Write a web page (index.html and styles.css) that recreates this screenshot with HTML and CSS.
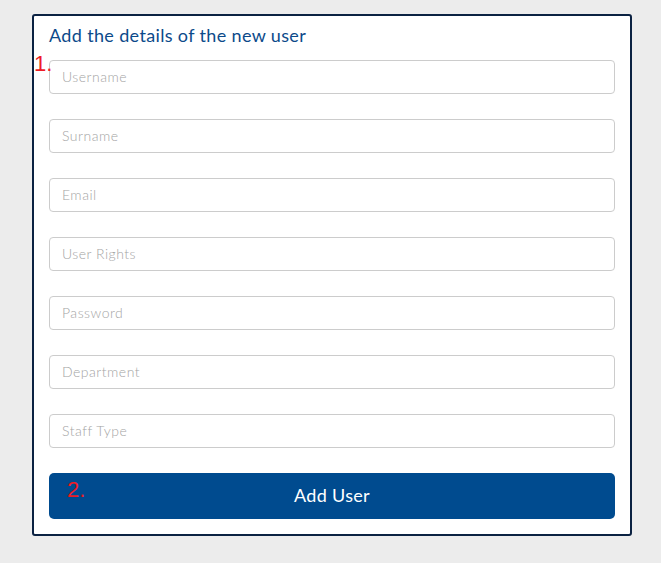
FILE: index.html
```html
<!DOCTYPE html>
<html lang="en">
<head>
<meta charset="utf-8">
<title>Add User</title>
<link rel="stylesheet" href="styles.css">
</head>
<body>
<div class="page">
  <div class="card">
    <span class="marker marker-1">1.</span>
    <h2 class="title">Add the details of the new user</h2>
    <form class="form">
      <input class="field" type="text" placeholder="Username">
      <input class="field" type="text" placeholder="Surname">
      <input class="field" type="text" placeholder="Email">
      <input class="field" type="text" placeholder="User Rights">
      <input class="field" type="password" placeholder="Password">
      <input class="field" type="text" placeholder="Department">
      <input class="field" type="text" placeholder="Staff Type">
      <button class="submit" type="button">Add User</button>
    </form>
    <span class="marker marker-2">2.</span>
  </div>
</div>
</body>
</html>
```
FILE: styles.css
```css
html, body {
  margin: 0;
  padding: 0;
  background: #ececec;
  font-family: Lato, "Open Sans", "Liberation Sans", sans-serif;
}
.page {
  padding: 14px 0 0 32px;
}
.card {
  position: relative;
  box-sizing: border-box;
  width: 600px;
  background: #fff;
  border: 2px solid #0b2242;
  border-radius: 3px;
  padding: 6px 15px 15px;
}
.title {
  margin: 0 0 12px;
  font-size: 18px;
  line-height: 26px;
  font-weight: 400;
  letter-spacing: 0.35px;
  color: #0c4a8a;
}
.form {
  display: flex;
  flex-direction: column;
  gap: 25px;
  margin: 0;
}
.field {
  box-sizing: border-box;
  height: 34px;
  width: 100%;
  margin: 0;
  border: 1px solid #cccccc;
  border-radius: 4px;
  padding: 0 12px 2px;
  font-family: inherit;
  font-size: 14px;
  font-weight: 300;
  letter-spacing: 0.5px;
  color: #555;
  background: #fff;
  outline: none;
}
.field::placeholder {
  color: #a4a4a4;
  opacity: 1;
}
.submit {
  box-sizing: border-box;
  height: 46px;
  width: 100%;
  border: none;
  border-radius: 5px;
  padding: 0 0 3px;
  background: #004b8f;
  color: #fff;
  font-family: inherit;
  font-size: 18px;
  font-weight: 400;
  letter-spacing: 0.3px;
  cursor: pointer;
}
.marker {
  position: absolute;
  color: #ee1c25;
  font-family: "Liberation Sans", sans-serif;
  font-size: 22px;
  line-height: 22px;
}
.marker-1 {
  left: 0;
  top: 37px;
}
.marker-2 {
  left: 33px;
  top: 463px;
}
```
